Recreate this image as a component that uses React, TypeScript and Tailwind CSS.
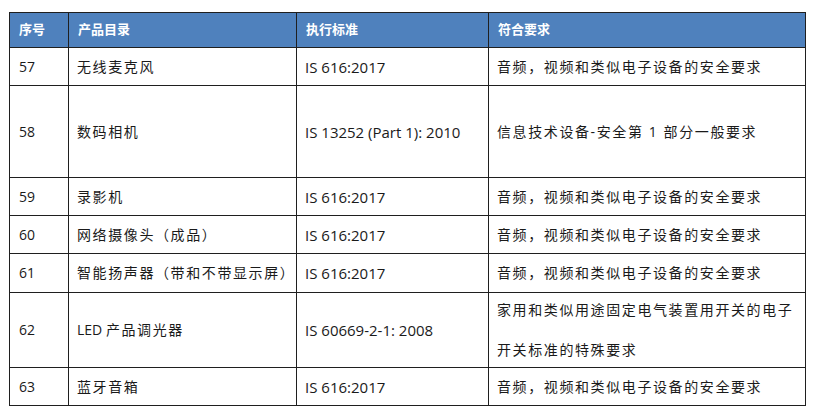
const rows = [
  { no: "57", name: "无线麦克风", std: "IS 616:2017", req: ["音频，视频和类似电子设备的安全要求"], h: "h-[38px]" },
  { no: "58", name: "数码相机", std: "IS 13252 (Part 1): 2010", req: ["信息技术设备-安全第 1 部分一般要求"], h: "h-[92px]" },
  { no: "59", name: "录影机", std: "IS 616:2017", req: ["音频，视频和类似电子设备的安全要求"], h: "h-[38px]" },
  { no: "60", name: "网络摄像头（成品）", std: "IS 616:2017", req: ["音频，视频和类似电子设备的安全要求"], h: "h-[38px]" },
  { no: "61", name: "智能扬声器（带和不带显示屏）", std: "IS 616:2017", req: ["音频，视频和类似电子设备的安全要求"], h: "h-[39px]" },
  { no: "62", name: "产品调光器", pre: "LED ", std: "IS 60669-2-1: 2008", req: ["家用和类似用途固定电气装置用开关的电子", "开关标准的特殊要求"], h: "h-[75px]" },
  { no: "63", name: "蓝牙音箱", std: "IS 616:2017", req: ["音频，视频和类似电子设备的安全要求"], h: "h-[38px]" },
];

const font = "font-['Open_Sans','Noto_Sans_CJK_SC',sans-serif]";

export default function App() {
  return (
    <div className={`w-[815px] h-[417px] bg-white pt-[12px] pl-[9px] ${font}`}>
      <table className="border-collapse table-fixed w-[796px] text-[#1a1a1a]">
        <colgroup>
          <col className="w-[59px]" />
          <col className="w-[228px]" />
          <col className="w-[192px]" />
          <col className="w-[317px]" />
        </colgroup>
        <thead>
          <tr className="h-[35px] bg-[#4f81bd] text-white text-[13px] font-bold">
            {["序号", "产品目录", "执行标准", "符合要求"].map((t) => (
              <th key={t} className="border border-[#1f1f1f] text-left px-[9px] font-bold">
                {t}
              </th>
            ))}
          </tr>
        </thead>
        <tbody className="text-[14px] leading-[20px]">
          {rows.map((r) => (
            <tr key={r.no} className={r.h}>
              <td className="border border-[#1f1f1f] px-[9px] p-0">{r.no}</td>
              <td className="border border-[#1f1f1f] px-[8px] p-0 whitespace-nowrap">
                {r.pre && <span>{r.pre}</span>}
                <span className="tracking-[1.6px]">{r.name}</span>
              </td>
              <td className="border border-[#1f1f1f] px-[8px] p-0 text-[15px]">{r.std}</td>
              <td className="border border-[#1f1f1f] px-[8px] p-0 tracking-[1.6px]">
                <div className="flex flex-col gap-[20px]">
                  {r.req.map((l) => (
                    <span key={l} className="whitespace-nowrap">{l}</span>
                  ))}
                </div>
              </td>
            </tr>
          ))}
        </tbody>
      </table>
    </div>
  );
}
